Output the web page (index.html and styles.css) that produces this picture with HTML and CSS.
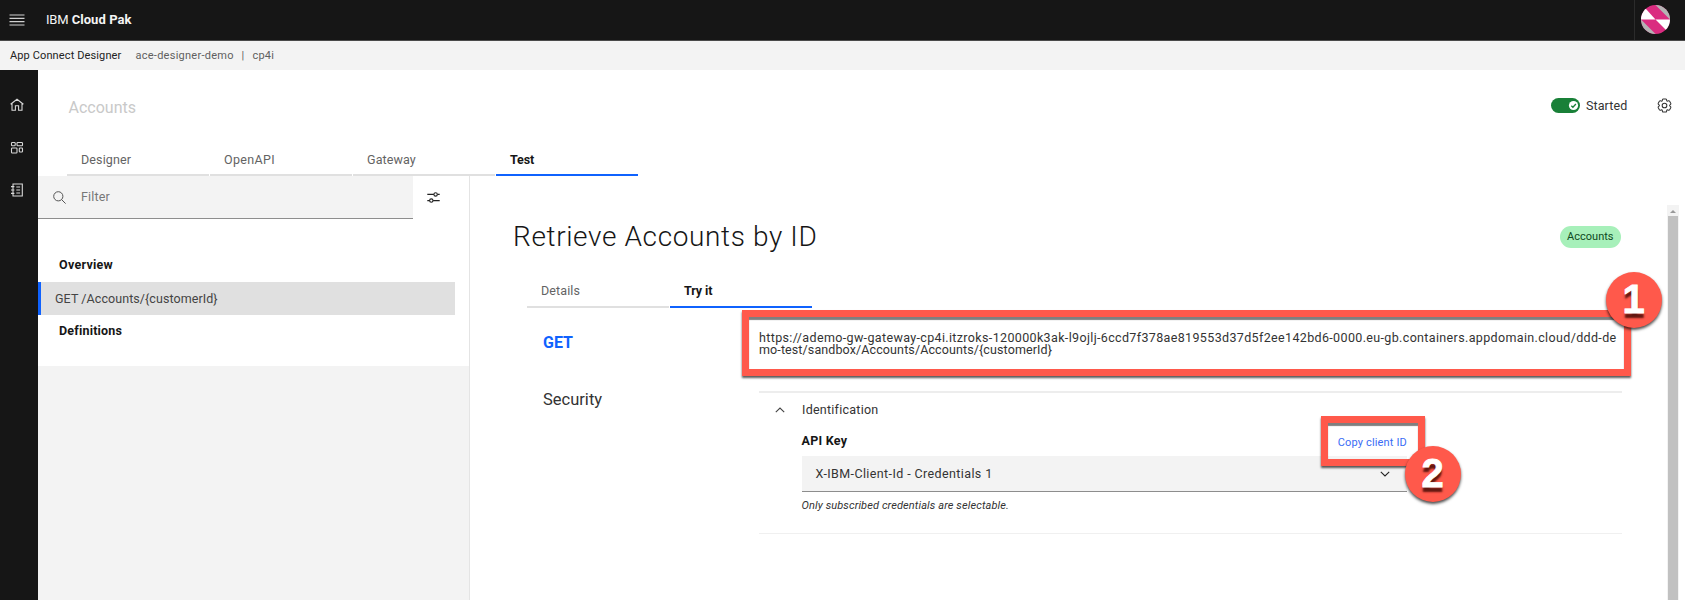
FILE: index.html
```html
<!DOCTYPE html>
<html lang="en">
<head>
<meta charset="utf-8">
<title>IBM Cloud Pak - App Connect Designer</title>
<link rel="stylesheet" href="styles.css">
</head>
<body>
<div class="app">
  <header class="topbar">
    <svg class="menu-icon" width="16" height="12" viewBox="0 0 16 12"><path d="M.5 1h15M.5 4.3h15M.5 7.7h15M.5 11h15"/></svg>
    <div class="brand"><span class="brand-light">IBM</span> <b>Cloud Pak</b></div>
    <div class="user">
      <svg width="29" height="29" viewBox="0 0 29 29">
        <defs><clipPath id="disc"><circle cx="14.5" cy="14.5" r="14.5"/></clipPath></defs>
        <g clip-path="url(#disc)">
          <rect width="29" height="29" fill="#da2c80"/>
          <path d="M14.5 0H29V14.5Z" fill="#b3b3b3"/>
          <path d="M0 14.5 14.5 29H0Z" fill="#b3b3b3"/>
          <path d="M0 0 5 4 14.500 14.500H0Z" fill="#fff"/>
          <path d="M29 14.500H14.500L25 25 29 29Z" fill="#fff"/>
        </g>
      </svg>
    </div>
  </header>
  <div class="context">
    <span class="context-app">App Connect Designer</span>
    <span class="context-name">ace-designer-demo</span>
    <span class="context-sep">|</span>
    <span class="context-ns">cp4i</span>
  </div>
  <div class="shell">
    <nav class="rail">
      <svg width="14" height="14" viewBox="0 0 14 14"><path d="M.6 6.300 7 1.200l6.400 5.100M2 5.300V12.300H5.400V7.800h3.200v4.500H12V5.300"/></svg>
      <svg width="14" height="14" viewBox="0 0 14 14"><rect x="1.500" y="1.500" width="3.700" height="3.300" rx=".8"/><rect x="7" y="1.500" width="5.500" height="3.300" rx=".8"/><rect x="1.500" y="7" width="5.500" height="5" rx=".8"/><rect x="9.300" y="7" width="3.200" height="4" rx=".8"/></svg>
      <svg width="14" height="14" viewBox="0 0 14 14"><path d="M3 1h9.300v12H3zM1 3.600h3.400M1 7h3.400M1 10.400h3.400M6.300 4h3.800M6.300 7h3.800M6.300 10h3.800"/></svg>
    </nav>
    <main class="content">
      <div class="flow-head">
        <h2 class="flow-name">Accounts</h2>
        <div class="flow-state">
          <svg class="toggle" width="29" height="15" viewBox="0 0 29 15"><rect width="29" height="15" rx="7.500" fill="#198038"/><circle cx="22.500" cy="7.500" r="4.600" fill="#fff"/><path d="m20.300 7.700 1.600 1.600 3-3.300" fill="none" stroke="#198038" stroke-width="1.300"/></svg>
          <span class="state-text">Started</span>
          <svg class="gear" width="15" height="15" viewBox="0 0 32 32"><path d="M27 16.760c0-.25 0-.5 0-.76s0-.51 0-.77l1.920-1.680A2 2 0 0 0 29.300 11L26.940 7a2 2 0 0 0-1.730-1 2 2 0 0 0-.64.1l-2.430.82a11.350 11.350 0 0 0-1.310-.75l-.51-2.520a2 2 0 0 0-2-1.610H13.640a2 2 0 0 0-2 1.610l-.51 2.520a11.480 11.480 0 0 0-1.320.75L7.430 6.060A2 2 0 0 0 6.790 6 2 2 0 0 0 5.060 7L2.700 11a2 2 0 0 0 .41 2.510L5 15.240c0 .25 0 .5 0 .76s0 .51 0 .77L3.110 18.450A2 2 0 0 0 2.700 21L5.060 25a2 2 0 0 0 1.730 1 2 2 0 0 0 .64-.1l2.430-.82a11.350 11.350 0 0 0 1.310.75l.51 2.520a2 2 0 0 0 2 1.610h4.720a2 2 0 0 0 2-1.610l.51-2.520a11.480 11.480 0 0 0 1.320-.75l2.420.82a2 2 0 0 0 .64.1 2 2 0 0 0 1.730-1L29.300 21a2 2 0 0 0-.41-2.510Z"/><circle cx="16" cy="16" r="5"/></svg>
        </div>
      </div>
      <div class="tabs flow-tabs">
        <div class="tab t-designer">Designer</div>
        <div class="tab t-openapi">OpenAPI</div>
        <div class="tab t-gateway">Gateway</div>
        <div class="tab t-test active">Test</div>
      </div>
      <div class="panes">
        <aside class="list-pane">
          <div class="list-card">
            <div class="filter-row">
              <div class="filter">
                <svg width="13" height="13" viewBox="0 0 13 13"><circle cx="5.300" cy="5.300" r="4.600"/><path d="m8.600 8.600 4 4"/></svg>
                <span>Filter</span>
              </div>
              <svg class="sliders" width="13" height="11" viewBox="0 0 13 11"><path d="M.3 2.400h6.600M10.400 2.400h2.300M.3 8.600h2.300M6.100 8.600h6.600"/><circle cx="8.600" cy="2.400" r="1.700"/><circle cx="4.300" cy="8.600" r="1.700"/></svg>
            </div>
            <ul class="ops">
              <li class="op-head">Overview</li>
              <li class="op-selected">GET /Accounts/{customerId}</li>
              <li class="op-head defs">Definitions</li>
            </ul>
          </div>
        </aside>
        <section class="detail">
          <div class="detail-head">
            <h1>Retrieve Accounts by ID</h1>
            <span class="tag">Accounts</span>
          </div>
          <div class="tabs detail-tabs">
            <div class="tab t-details">Details</div>
            <div class="tab t-try active">Try it</div>
          </div>
          <div class="try-grid">
            <div class="verb">GET</div>
            <div class="url">
              <div class="url-a">https://ademo-gw-gateway-cp4i.itzroks-120000k3ak-l9ojlj-6ccd7f378ae819553d37d5f2ee142bd6-0000.eu-gb.containers.appdomain.cloud/ddd-de</div>
              <div class="url-b">mo-test/sandbox/Accounts/Accounts/{customerId}</div>
            </div>
            <div class="sec-label">Security</div>
            <div class="sec-panel">
              <div class="accordion">
                <svg width="10" height="6" viewBox="0 0 10 6"><path d="M.8 5.200 5 1l4.200 4.200"/></svg>
                <span>Identification</span>
              </div>
              <div class="key">
                <div class="key-head"><b>API Key</b><a class="copy">Copy client ID</a></div>
                <div class="select"><span>X-IBM-Client-Id - Credentials 1</span><svg width="10" height="6" viewBox="0 0 10 6"><path d="M.8.8 5 5 9.200.8"/></svg></div>
                <div class="help">Only subscribed credentials are selectable.</div>
              </div>
            </div>
          </div>
          <div class="scrollbar"><i class="scroll-up"></i><div class="scroll-thumb"></div></div>
        </section>
      </div>
    </main>
  </div>
  <div class="frame frame-url"></div>
  <div class="frame frame-copy"></div>
  <div class="step step-one">1</div>
  <div class="step step-two">2</div>
</div>
</body>
</html>
```
FILE: styles.css
```css
* { box-sizing: border-box; }
body, h1, h2, ul { margin: 0; padding: 0; }
ul { list-style: none; }
body { font: 12.5px/16px Roboto, "Liberation Sans", sans-serif; color: #333; background: #fff; }
svg { display: block; flex: none; fill: none; }
.app { position: relative; width: 1685px; height: 600px; overflow: hidden; display: flex; flex-direction: column; white-space: nowrap; }

.topbar { flex: none; height: 41px; background: #161616; border-bottom: 1px solid #4a4a4a; display: flex; align-items: center; color: #f4f4f4; font-size: 13px; }
.menu-icon { margin-left: 9px; stroke: #d0d0d0; stroke-width: 1.2; }
.brand { margin-left: 21px; }
.brand-light { letter-spacing: -.2px; }
.brand b { letter-spacing: .07px; }
.user { margin-left: auto; width: 51px; height: 40px; border-left: 1px solid #2b2b2b; padding: 5px 0 0 6px; }

.context { flex: none; height: 29px; background: #f3f3f3; display: flex; align-items: center; padding: 0 0 0 10px; font-size: 11px; color: #5f5f5f; }
.context-app { width: 125.500px; color: #222; letter-spacing: .12px; }
.context-name { width: 106px; letter-spacing: .26px; }
.context-sep { width: 11px; }
.context-ns { letter-spacing: .2px; }

.shell { flex: 1; display: flex; min-height: 0; }
.rail { width: 38px; background: #161616; display: flex; flex-direction: column; align-items: center; gap: 28.500px; padding: 28px 4px 0 0; }
.rail svg { stroke: #d8d8d8; stroke-width: 1.1; }
.content { flex: 1; display: flex; flex-direction: column; }

.flow-head { height: 70px; padding: 0 13px 0 30.500px; display: flex; align-items: center; justify-content: space-between; }
.flow-name { font-size: 16px; font-weight: 400; color: #c9c9c9; padding-top: 5px; }
.flow-state { display: flex; align-items: center; }
.state-text { width: 71px; margin-left: 6.500px; padding-top: 1px; letter-spacing: .1px; }
.gear { stroke: #333; stroke-width: 2.200; }

.tabs { display: flex; gap: 1px; }
.tab { width: 142px; height: 36px; padding: 12px 0 0 14px; border-bottom: 2px solid #e0e0e0; color: #636363; letter-spacing: .12px; }
.tab.active { border-color: #0f62fe; color: #161616; font-weight: 700; letter-spacing: -.1px; }
.flow-tabs { padding-left: 29px; }
.t-openapi { letter-spacing: .34px; }

.panes { flex: 1; display: flex; min-height: 0; }
.list-pane { width: 432px; background: #f3f3f3; border-right: 1px solid #e4e4e4; }
.list-card { height: 190px; background: #fff; }
.filter-row { display: flex; align-items: center; }
.filter { width: 374.500px; height: 43px; background: #f3f3f3; border-bottom: 1px solid #8d8d8d; display: flex; align-items: center; gap: 15px; padding-left: 15px; color: #777; letter-spacing: .17px; }
.filter svg { stroke: #555; stroke-width: 1; }
.sliders { margin-left: 14px; stroke: #222; stroke-width: 1.1; }
.ops { padding-top: 30px; }
.op-head { height: 33px; line-height: 31px; padding-left: 21px; font-weight: 700; color: #161616; letter-spacing: .27px; }
.defs { letter-spacing: .2px; }
.op-selected { width: 417px; height: 33px; line-height: 33px; padding-left: 14px; background: #e0e0e0; border-left: 3px solid #0f62fe; letter-spacing: .07px; color: #444; }

.detail { flex: 1; position: relative; }
.detail-head { height: 96px; padding: 26px 64px 0 43px; display: flex; justify-content: space-between; align-items: center; }
.detail-head h1 { font-size: 28px; font-weight: 300; line-height: 40px; color: #161616; letter-spacing: .62px; }
.tag { height: 22px; line-height: 22px; padding: 0 7.500px; border-radius: 11px; background: #a7f0ba; color: #0e4a22; font-size: 11px; }
.detail-tabs { padding-left: 57px; }
.detail-tabs .tab { padding-top: 11px; }

.try-grid { display: grid; grid-template-columns: 216px 863px; grid-template-rows: 83px 143px; padding-left: 73px; }
.verb { font-size: 16px; font-weight: 700; color: #0f62fe; line-height: 20px; padding-top: 25px; }
.url { padding-top: 23.500px; line-height: 12.500px; }
.url-a { letter-spacing: .355px; }
.url-b { letter-spacing: .11px; }
.sec-label { font-size: 16.500px; line-height: 18px; }
.sec-panel { border-top: 2px solid #ededed; border-bottom: 1px solid #f0f0f0; }
.accordion { display: flex; align-items: center; gap: 17px; padding: 9px 0 0 16px; letter-spacing: .25px; }
.accordion svg { stroke: #444; stroke-width: 1.100; }
.key { width: 648px; padding-left: 42.500px; }
.key-head { display: flex; justify-content: space-between; height: 38px; padding-top: 15px; color: #161616; }
.key-head b { letter-spacing: .25px; }
.copy { font-size: 11px; color: #3a6cf5; padding-top: 2px; letter-spacing: .16px; }
.select { height: 36px; background: #f3f3f3; border-bottom: 1px solid #8d8d8d; display: flex; align-items: center; justify-content: space-between; padding: 0 17px 0 14px; letter-spacing: .39px; }
.select svg { stroke: #222; stroke-width: 1.100; }
.help { padding-top: 6px; font-size: 11px; font-style: italic; letter-spacing: .11px; }

.scrollbar { position: absolute; right: 6px; top: 29px; bottom: 0; width: 12px; background: #f3f3f3; padding: 4px 1px 0; display: flex; flex-direction: column; align-items: center; }
.scroll-up { border: 3px solid transparent; border-top: 0; border-bottom: 3px solid #999; margin: 1px 0 3px; }
.scroll-thumb { flex: 1; width: 10px; background: #c1c1c1; }

/* Walkthrough callouts drawn over the page */
.frame { position: absolute; border: 7.500px solid #ff594b; box-shadow: 0 2px 2px rgba(0,0,0,.65), inset 0 3px 1px rgba(0,0,0,.5); }
.frame-url { left: 742px; top: 310px; width: 889px; height: 66px; }
.frame-copy { left: 1321px; top: 416px; width: 104px; height: 50px; }
.step { position: absolute; width: 56px; height: 56px; border-radius: 50%; background: #ff594b; color: #fff; font: 700 40px/54px "Liberation Sans", Arial, sans-serif; text-align: center; -webkit-text-stroke: .8px #fff; text-shadow: 0 5px 2px rgba(80,15,10,.9); box-shadow: 0 2px 3px rgba(0,0,0,.7); }
.step-one { left: 1605.500px; top: 272px; }
.step-two { left: 1404.500px; top: 446px; }
```
